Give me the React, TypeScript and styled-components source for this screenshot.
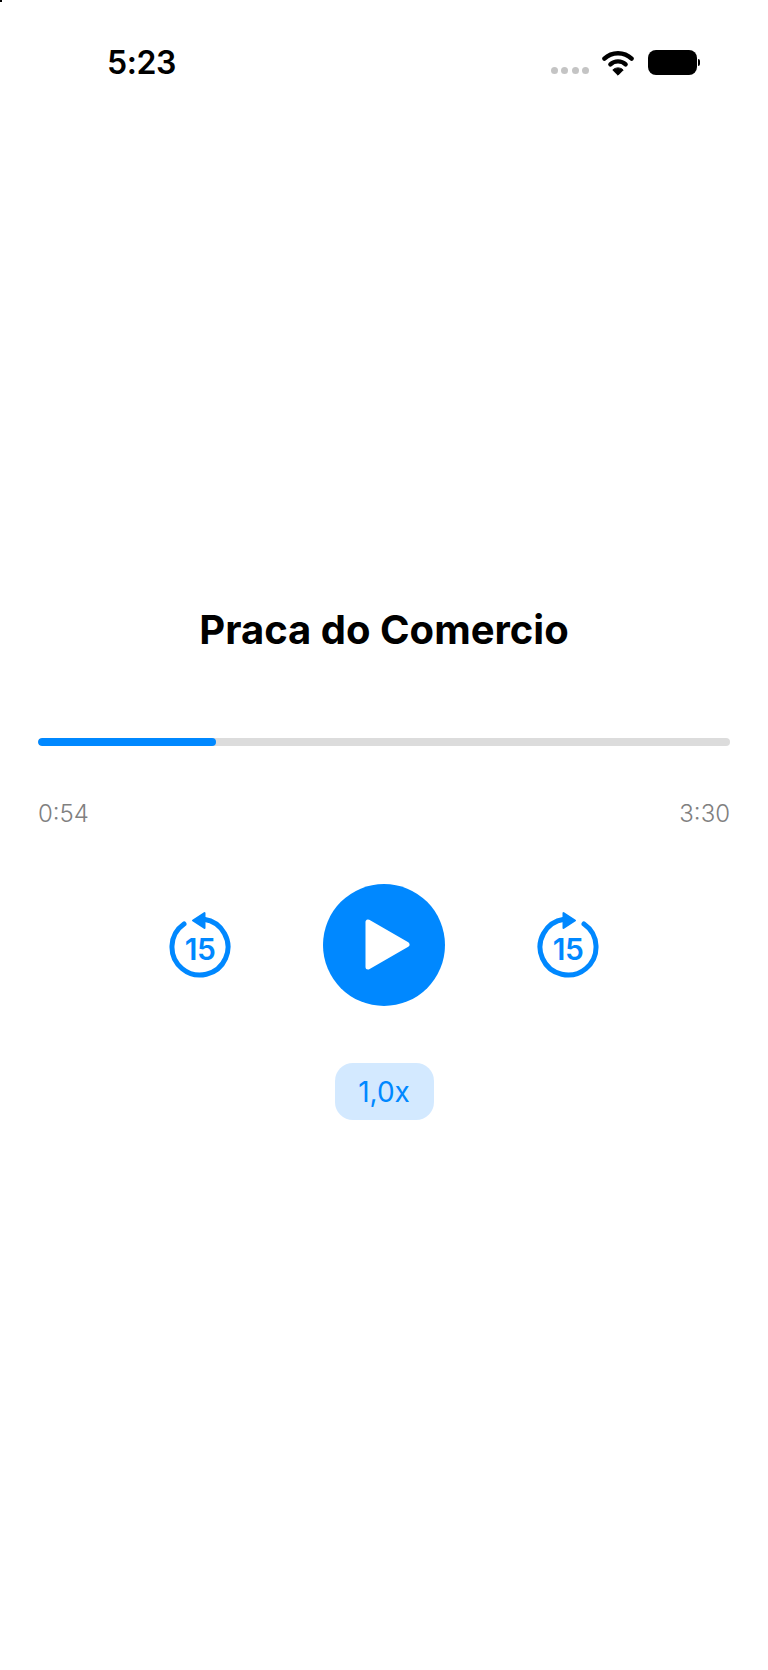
import React from "react";
import styled, { createGlobalStyle } from "styled-components";

const BLUE = "#0088ff";

const GlobalStyle = createGlobalStyle`
  html, body {
    margin: 0;
    padding: 0;
    background: #ffffff;
  }
  body {
    font-family: Inter, "Liberation Sans", sans-serif;
  }
`;

const SkipIcon: React.FC<{ direction: "back" | "forward" }> = ({ direction }) => {
    const back = direction === "back";
    return (
        <SkipButton aria-label={back ? "Back 15 seconds" : "Forward 15 seconds"}>
            <svg width="64" height="76" viewBox="0 0 64 76" fill="none">
                <path
                    d={back ? "M16 17A28 28 0 1 0 36 12.3" : "M48 17A28 28 0 1 1 28 12.3"}
                    stroke={BLUE}
                    strokeWidth="5"
                    strokeLinecap="round"
                />
                <polygon
                    points={back ? "25,13.5 36.5,6 36.5,21" : "39,13.5 27.5,6 27.5,21"}
                    fill={BLUE}
                    stroke={BLUE}
                    strokeWidth="2"
                    strokeLinejoin="round"
                />
                <SkipLabel x="32" y="52.5" textAnchor="middle">15</SkipLabel>
            </svg>
        </SkipButton>
    );
};

const App: React.FC = () => {
    const progress = (216 - 38) / (730 - 38);

    return (
        <Page>
            <GlobalStyle />
            <Speck />
            <StatusBar>
                <Clock>5:23</Clock>
                <StatusIcons>
                    <Signal>
                        <Dot />
                        <Dot />
                        <Dot />
                        <Dot />
                    </Signal>
                    <svg width="32" height="26" viewBox="0 0 32 26" fill="none">
                        <path d="M2.4 8.6C9.8 1.4 22.2 1.4 29.6 8.6" stroke="#000" strokeWidth="4.4" strokeLinecap="round" />
                        <path d="M8.4 14.4C12.6 10.4 19.4 10.4 23.6 14.4" stroke="#000" strokeWidth="4.4" strokeLinecap="round" />
                        <path d="M16 25.2L10.8 20C13.6 17.2 18.4 17.2 21.2 20Z" fill="#000" stroke="#000" strokeLinejoin="round" />
                    </svg>
                    <Battery>
                        <BatteryBody />
                        <BatteryCap />
                    </Battery>
                </StatusIcons>
            </StatusBar>

            <Title>Praca do Comercio</Title>

            <Track>
                <Fill style={{ width: `${progress * 100}%` }} />
            </Track>

            <Times>
                <span>0:54</span>
                <span>3:30</span>
            </Times>

            <Controls>
                <SkipIcon direction="back" />
                <PlayButton aria-label="Play">
                    <svg width="122" height="122" viewBox="0 0 122 122">
                        <polygon points="45,38 45,83 84,60.5" fill="#fff" stroke="#fff" strokeWidth="5" strokeLinejoin="round" />
                    </svg>
                </PlayButton>
                <SkipIcon direction="forward" />
            </Controls>

            <SpeedButton>1,0x</SpeedButton>
        </Page>
    );
};

export default App;

const Page = styled.div`
  position: relative;
  width: 768px;
  min-height: 1670px;
  display: flex;
  flex-direction: column;
  align-items: center;
  background: #ffffff;
`;

const Speck = styled.div`
  position: absolute;
  top: 0;
  left: 0;
  width: 2px;
  height: 2px;
  background: #000000;
`;

const StatusBar = styled.div`
  width: 100%;
  height: 100px;
  box-sizing: border-box;
  padding: 43px 68px 0 107px;
  display: flex;
  justify-content: space-between;
  align-items: flex-start;
`;

const Clock = styled.div`
  font-size: 32px;
  line-height: 39px;
  font-weight: 600;
  letter-spacing: -0.4px;
  color: #000000;
`;

const StatusIcons = styled.div`
  display: flex;
  align-items: flex-start;
  padding-top: 7px;
`;

const Signal = styled.div`
  display: flex;
  gap: 3.5px;
  margin: 17px 13px 0 0;
`;

const Dot = styled.span`
  width: 7px;
  height: 7px;
  border-radius: 50%;
  background: #c4c4c4;
`;

const Battery = styled.div`
  display: flex;
  align-items: center;
  margin-left: 14px;
`;

const BatteryBody = styled.div`
  width: 49px;
  height: 25px;
  border-radius: 8px;
  background: #000000;
`;

const BatteryCap = styled.div`
  width: 2px;
  height: 7px;
  margin-left: 1px;
  border-radius: 0 3px 3px 0;
  background: #000000;
`;

const Title = styled.h1`
  margin: 506px 0 0;
  font-size: 40px;
  line-height: 48px;
  font-weight: 700;
  color: #000000;
`;

const Track = styled.div`
  width: 692px;
  height: 8px;
  margin-top: 84px;
  border-radius: 4px;
  background: #dcdcdc;
  overflow: hidden;
`;

const Fill = styled.div`
  height: 100%;
  border-radius: 4px;
  background: ${BLUE};
`;

const Times = styled.div`
  width: 692px;
  margin-top: 54px;
  display: flex;
  justify-content: space-between;
  font-size: 24px;
  line-height: 27px;
  font-weight: 300;
  color: #808080;
`;

const Controls = styled.div`
  margin-top: 57px;
  display: flex;
  align-items: center;
  gap: 91px;
`;

const SkipButton = styled.div`
  display: flex;
  width: 64px;
  height: 76px;
`;

const SkipLabel = styled.text`
  font-family: Inter, "Liberation Sans", sans-serif;
  font-size: 30px;
  font-weight: 600;
  letter-spacing: -0.5px;
  fill: ${BLUE};
`;

const PlayButton = styled.div`
  display: flex;
  width: 122px;
  height: 122px;
  border-radius: 50%;
  background: ${BLUE};
`;

const SpeedButton = styled.div`
  width: 99px;
  height: 57px;
  margin-top: 57px;
  display: flex;
  align-items: center;
  justify-content: center;
  border-radius: 18px;
  background: #d3e9ff;
  color: ${BLUE};
  font-size: 28px;
  font-weight: 400;
`;
